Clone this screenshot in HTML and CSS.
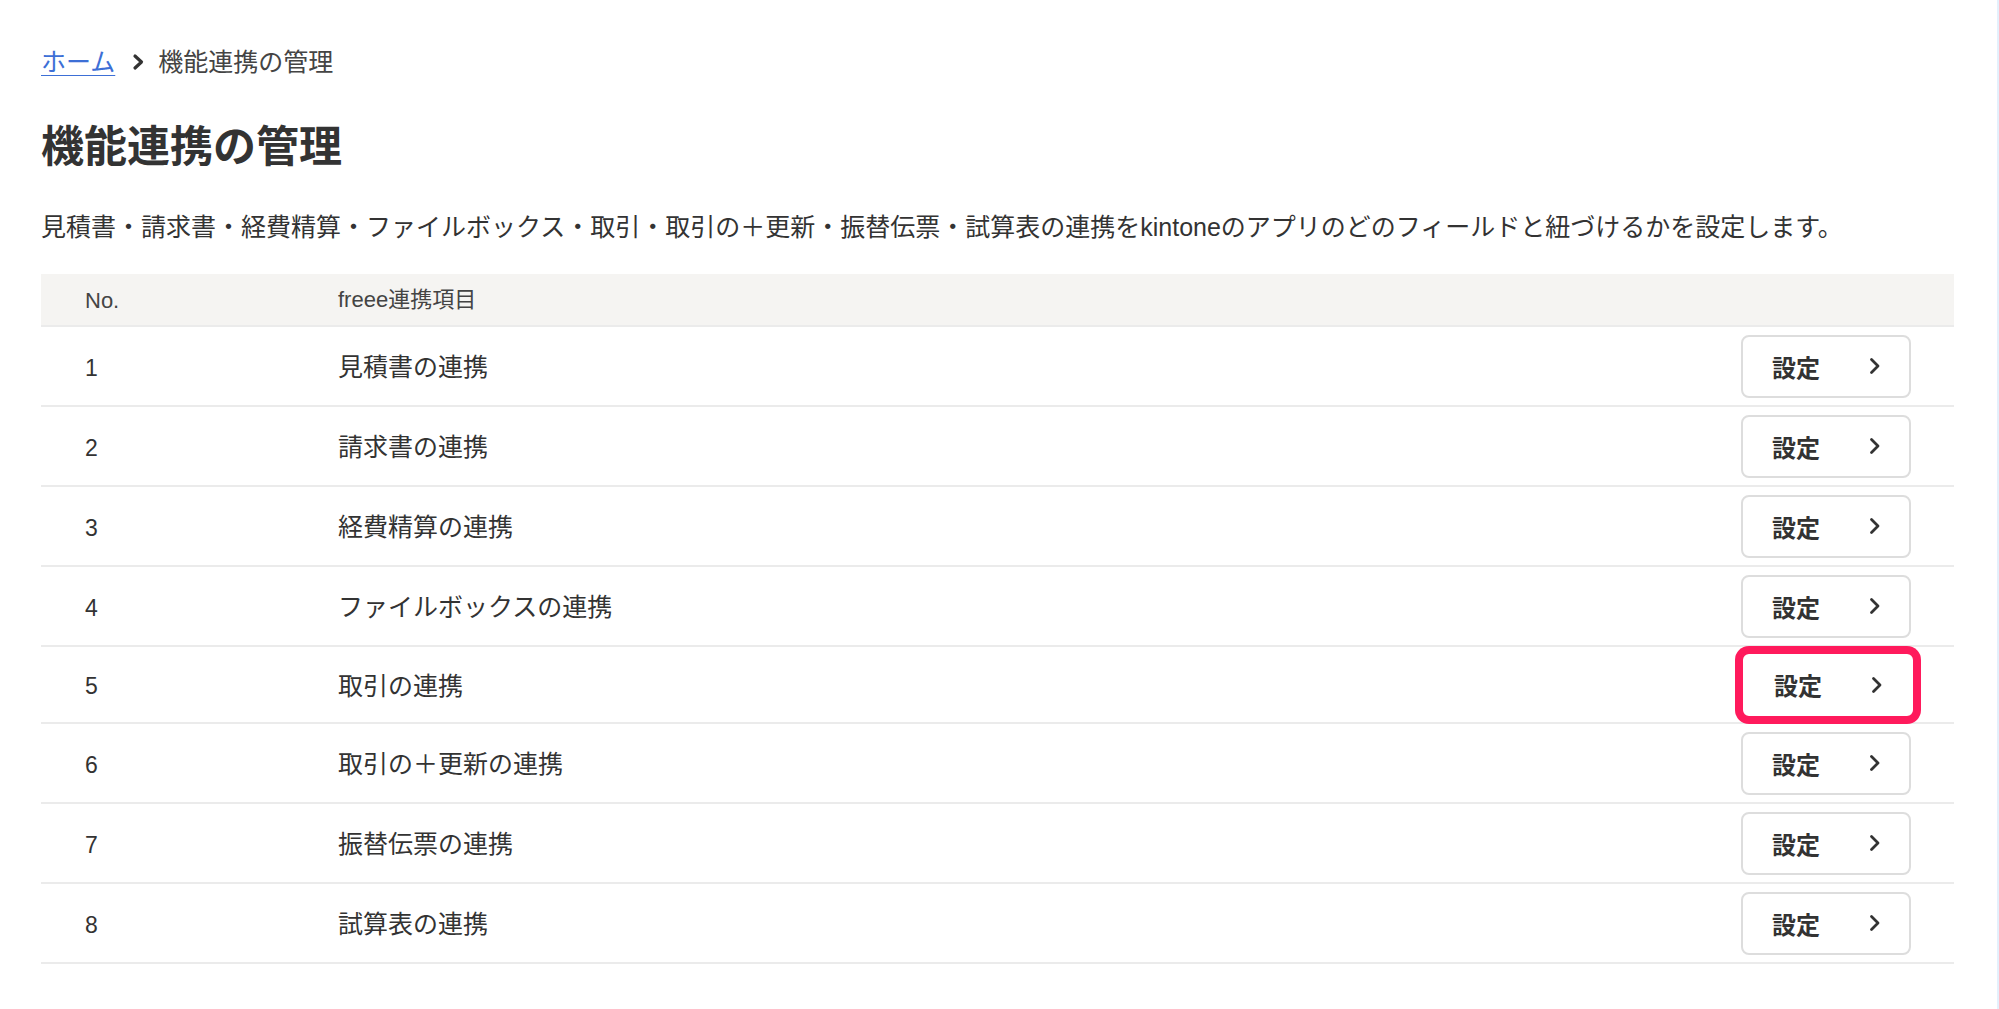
FILE: index.html
```html
<!DOCTYPE html>
<html lang="ja">
<head>
<meta charset="utf-8">
<title>機能連携の管理</title>
<link rel="stylesheet" href="styles.css">
</head>
<body>
<div class="page">
  <nav class="breadcrumb">
    <a class="crumb-link" href="#">ホーム</a>
    <svg class="crumb-sep" width="14" height="18" viewBox="0 0 14 18"><path d="M4 3 L10.5 9 L4 15" fill="none" stroke="#333" stroke-width="3.2" stroke-linecap="round" stroke-linejoin="round"/></svg>
    <span class="crumb-current">機能連携の管理</span>
  </nav>
  <h1 class="title">機能連携の管理</h1>
  <p class="desc">見積書・請求書・経費精算・ファイルボックス・取引・取引の＋更新・振替伝票・試算表の連携をkintoneのアプリのどのフィールドと紐づけるかを設定します。</p>

  <div class="table">
    <div class="row head">
      <div class="cell num">No.</div>
      <div class="cell name">freee連携項目</div>
      <div class="cell action"></div>
    </div>
    <div class="row">
      <div class="cell num">1</div>
      <div class="cell name">見積書の連携</div>
      <div class="cell action"><button class="btn"><span>設定</span><svg width="12" height="20" viewBox="0 0 12 20"><path d="M2.5 3.5 L9 10 L2.5 16.5" fill="none" stroke="#333" stroke-width="2.8" stroke-linecap="round" stroke-linejoin="round"/></svg></button></div>
    </div>
    <div class="row">
      <div class="cell num">2</div>
      <div class="cell name">請求書の連携</div>
      <div class="cell action"><button class="btn"><span>設定</span><svg width="12" height="20" viewBox="0 0 12 20"><path d="M2.5 3.5 L9 10 L2.5 16.5" fill="none" stroke="#333" stroke-width="2.8" stroke-linecap="round" stroke-linejoin="round"/></svg></button></div>
    </div>
    <div class="row">
      <div class="cell num">3</div>
      <div class="cell name">経費精算の連携</div>
      <div class="cell action"><button class="btn"><span>設定</span><svg width="12" height="20" viewBox="0 0 12 20"><path d="M2.5 3.5 L9 10 L2.5 16.5" fill="none" stroke="#333" stroke-width="2.8" stroke-linecap="round" stroke-linejoin="round"/></svg></button></div>
    </div>
    <div class="row">
      <div class="cell num">4</div>
      <div class="cell name">ファイルボックスの連携</div>
      <div class="cell action"><button class="btn"><span>設定</span><svg width="12" height="20" viewBox="0 0 12 20"><path d="M2.5 3.5 L9 10 L2.5 16.5" fill="none" stroke="#333" stroke-width="2.8" stroke-linecap="round" stroke-linejoin="round"/></svg></button></div>
    </div>
    <div class="row row-short">
      <div class="cell num">5</div>
      <div class="cell name">取引の連携</div>
      <div class="cell action"><button class="btn btn-marked"><span>設定</span><svg width="12" height="20" viewBox="0 0 12 20"><path d="M2.5 3.5 L9 10 L2.5 16.5" fill="none" stroke="#333" stroke-width="2.8" stroke-linecap="round" stroke-linejoin="round"/></svg></button></div>
    </div>
    <div class="row">
      <div class="cell num">6</div>
      <div class="cell name">取引の＋更新の連携</div>
      <div class="cell action"><button class="btn"><span>設定</span><svg width="12" height="20" viewBox="0 0 12 20"><path d="M2.5 3.5 L9 10 L2.5 16.5" fill="none" stroke="#333" stroke-width="2.8" stroke-linecap="round" stroke-linejoin="round"/></svg></button></div>
    </div>
    <div class="row">
      <div class="cell num">7</div>
      <div class="cell name">振替伝票の連携</div>
      <div class="cell action"><button class="btn"><span>設定</span><svg width="12" height="20" viewBox="0 0 12 20"><path d="M2.5 3.5 L9 10 L2.5 16.5" fill="none" stroke="#333" stroke-width="2.8" stroke-linecap="round" stroke-linejoin="round"/></svg></button></div>
    </div>
    <div class="row">
      <div class="cell num">8</div>
      <div class="cell name">試算表の連携</div>
      <div class="cell action"><button class="btn"><span>設定</span><svg width="12" height="20" viewBox="0 0 12 20"><path d="M2.5 3.5 L9 10 L2.5 16.5" fill="none" stroke="#333" stroke-width="2.8" stroke-linecap="round" stroke-linejoin="round"/></svg></button></div>
    </div>
  </div>
</div>
</body>
</html>
```

FILE: styles.css
```css
* { box-sizing: border-box; }
html, body { margin: 0; padding: 0; background: #fff; }
body {
  font-family: "Liberation Sans", "Noto Sans CJK JP", sans-serif;
  color: #333;
}
.page {
  min-height: 100vh;
  padding: 44px 43px 0 41px;
  border-right: 2px solid #e4f0fc;
}
.breadcrumb {
  display: flex;
  align-items: center;
  gap: 13px;
  font-size: 25px;
  line-height: 36px;
  height: 36px;
}
.crumb-link {
  color: #3d6fd6;
  text-decoration: underline;
  text-underline-offset: 4px;
  text-decoration-thickness: 1px;
}
.crumb-sep { display: block; margin-left: 3px; }
.crumb-current { color: #444; }
.title {
  margin: 37px 0 0;
  font-size: 43px;
  line-height: 60px;
  font-weight: 700;
  color: #333;
}
.desc {
  margin: 32px 0 0;
  font-size: 25px;
  line-height: 36px;
  color: #333;
}
.table { margin-top: 29px; }
.row {
  display: grid;
  grid-template-columns: 297px 1fr auto;
  align-items: center;
  height: 80px;
  border-bottom: 2px solid #ebebeb;
}
.row.head {
  height: 53px;
  background: #f5f4f2;
}
.row.row-short { height: 77px; }
.cell.num {
  padding-left: 44px;
  padding-top: 3px;
  font-size: 23px;
  line-height: 32px;
}
.cell.name { font-size: 25px; line-height: 36px; padding-top: 2px; }
.head .cell { font-size: 22px; color: #444; }
.head .cell.num { padding-top: 2px; }
.head .cell.name { padding-top: 0; }
.cell.action {
  display: flex;
  justify-content: flex-end;
  padding-right: 43px;
}
.btn {
  display: flex;
  align-items: center;
  justify-content: space-between;
  width: 170px;
  height: 63px;
  padding: 0 28px 0 29px;
  background: #fff;
  border: 2px solid #dddddd;
  border-radius: 8px;
  font-family: inherit;
  font-size: 24px;
  font-weight: 700;
  color: #333;
}
.btn svg { display: block; }
.btn-marked {
  width: 176px;
  height: 68px;
  margin-right: -5px;
  padding: 0 30px 0 31px;
  border: 3px solid #ff1a5c;
  border-radius: 9px;
  box-shadow: 0 0 0 5px #ff1a5c;
}
```
